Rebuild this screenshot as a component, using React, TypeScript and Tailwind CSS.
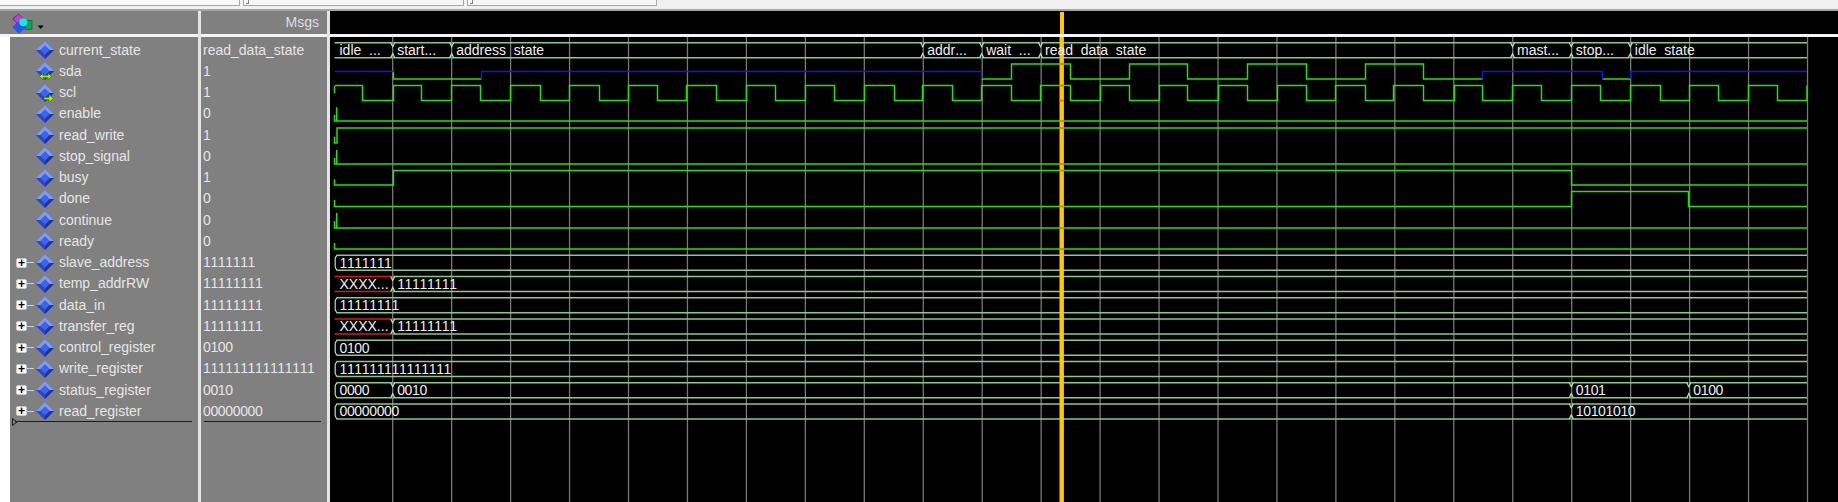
import React from "react";

const FONT = "font-['Liberation_Sans',Arial,sans-serif] [font-kerning:none]";

type Sig = { name: string; value: string; kind?: "plain" | "bi" | "out" | "bus" };
const signals: Sig[] = [
  { name: "current_state", value: "read_data_state" },
  { name: "sda", value: "1", kind: "bi" },
  { name: "scl", value: "1", kind: "out" },
  { name: "enable", value: "0" },
  { name: "read_write", value: "1" },
  { name: "stop_signal", value: "0" },
  { name: "busy", value: "1" },
  { name: "done", value: "0" },
  { name: "continue", value: "0" },
  { name: "ready", value: "0" },
  { name: "slave_address", value: "1111111", kind: "bus" },
  { name: "temp_addrRW", value: "11111111", kind: "bus" },
  { name: "data_in", value: "11111111", kind: "bus" },
  { name: "transfer_reg", value: "11111111", kind: "bus" },
  { name: "control_register", value: "0100", kind: "bus" },
  { name: "write_register", value: "111111111111111", kind: "bus" },
  { name: "status_register", value: "0010", kind: "bus" },
  { name: "read_register", value: "00000000", kind: "bus" },
];

const END = 1807;
const grid = Array.from({ length: 25 }, (_, i) => 392.7 + 58.95 * i);
const rowTop = (i: number) => 42.7 + 21.25 * i;
const G = "#22e600";
const BUS = "#8cc88c";
const TICK = "#a8f0a8";

function Diamond({ kind }: { kind?: Sig["kind"] }) {
  return (
    <svg width="22" height="22" viewBox="0 0 22 22" className="shrink-0">
      <polygon points="11,2 20,11 11,20 2,11" fill="#3f63df" />
      <polygon points="11,2 20,11 15.5,11 11,6.5 6.5,11 2,11" fill="#7d9cf0" />
      <polygon points="2,11 6.5,11 11,15.5 11,20" fill="#2b47c4" />
      <polygon points="20,11 15.5,11 11,15.5 11,20" fill="#1f33a8" />
      <polygon points="11,6.5 15.5,11 11,15.5 6.5,11" fill="#3d64ea" />
      {kind === "bi" && (
        <polygon
          points="5.5,16.5 9,13 9,15.3 14,15.3 14,13 17.5,16.5 14,20 14,17.7 9,17.7 9,20"
          fill="#a6f000"
          stroke="#127a10"
          strokeWidth="0.7"
        />
      )}
      {kind === "out" && (
        <polygon points="10,15.3 15,15.3 15,12.5 19.5,16.5 15,20.5 15,17.7 10,17.7" fill="#a6f000" stroke="#127a10" strokeWidth="0.7" />
      )}
    </svg>
  );
}

function NameRow({ s }: { s: Sig }) {
  return (
    <div className="flex h-[21.25px] items-center">
      <div className="flex w-[24px] items-center justify-end">
        {s.kind === "bus" && (
          <>
            <span className="flex h-[10px] w-[11px] items-center justify-center rounded-[2px] border border-[#c4c8d4] bg-white text-[12px] font-bold leading-none text-black">
              +
            </span>
            <span className="h-[1px] w-[7px] bg-[#cfcfcf]" />
          </>
        )}
      </div>
      <Diamond kind={s.kind} />
      <span className="ml-[3px] whitespace-nowrap text-[14px] text-[#e6e6e6]">{s.name}</span>
    </div>
  );
}

const sclEdges = [
  362.5, 393.5, 421.5, 451.5, 480.5, 510.5, 540.5, 569.5, 599.5, 628.5, 657.5, 686.5, 716.5, 746.5, 775.5, 805.5, 834.5, 864.5, 894.5, 922.5, 952.5,
  981.5, 1011.5, 1040.5, 1070.5, 1100.5, 1129.5, 1159.5, 1187.5, 1218.5, 1247.5, 1277.5, 1306.5, 1335.5, 1365.5, 1393.5, 1423.5, 1454.5, 1482.5, 1512.5,
  1541.5, 1571.5, 1600.5, 1630.5, 1660.5, 1689.5, 1718.5, 1748.5, 1777.5, 1807,
];

const sclPath = (() => {
  const hi = 85.5;
  const lo = 100.5;
  let d = `M335 ${hi}`;
  sclEdges.forEach((x, i) => {
    const a = i % 2 === 0 ? hi : lo;
    const b = i % 2 === 0 ? lo : hi;
    d += ` L${x} ${a} L${x} ${b}`;
  });
  return d;
})();

type Seg = { x1: number; x2: number; label?: string; red?: boolean; noTick?: boolean };
const busRows: { row: number; segs: Seg[] }[] = [
  {
    row: 0,
    segs: [
      { x1: 334, x2: 392.7, label: "idle  ...", noTick: true },
      { x1: 392.7, x2: 451.7, label: "start..." },
      { x1: 451.7, x2: 922.7, label: "address  state" },
      { x1: 922.7, x2: 981.7, label: "addr..." },
      { x1: 981.7, x2: 1040.5, label: "wait  ..." },
      { x1: 1040.5, x2: 1512.5, label: "read  data  state" },
      { x1: 1512.5, x2: 1571.3, label: "mast..." },
      { x1: 1571.3, x2: 1630.3, label: "stop..." },
      { x1: 1630.3, x2: END, label: "idle  state" },
    ],
  },
  { row: 10, segs: [{ x1: 335, x2: END, label: "1111111" }] },
  {
    row: 11,
    segs: [
      { x1: 334, x2: 392.7, label: "XXXX...", red: true, noTick: true },
      { x1: 392.7, x2: END, label: "11111111" },
    ],
  },
  { row: 12, segs: [{ x1: 335, x2: END, label: "11111111" }] },
  {
    row: 13,
    segs: [
      { x1: 334, x2: 392.7, label: "XXXX...", red: true, noTick: true },
      { x1: 392.7, x2: END, label: "11111111" },
    ],
  },
  { row: 14, segs: [{ x1: 335, x2: END, label: "0100" }] },
  { row: 15, segs: [{ x1: 335, x2: END, label: "111111111111111" }] },
  {
    row: 16,
    segs: [
      { x1: 335, x2: 392.7, label: "0000" },
      { x1: 392.7, x2: 1571.3, label: "0010" },
      { x1: 1571.3, x2: 1688.8, label: "0101" },
      { x1: 1688.8, x2: END, label: "0100" },
    ],
  },
  {
    row: 17,
    segs: [
      { x1: 335, x2: 1571.3, label: "00000000" },
      { x1: 1571.3, x2: END, label: "10101010" },
    ],
  },
];

function BusShape({ row, seg }: { row: number; seg: Seg }) {
  const t = rowTop(row);
  const b = t + 15;
  const x1 = seg.x1;
  const x2 = seg.x2;
  const first = x1 < 340;
  const rightEnd = x2 >= END ? x2 : x2 - 0.5;
  const leftEnd = first && !seg.noTick ? x1 + 1.5 : x1 + 0.5;
  return (
    <g fill="none">
      <path d={`M${leftEnd} ${t} L${rightEnd} ${t} M${leftEnd} ${b} L${rightEnd} ${b}`} stroke={seg.red ? "#d81818" : BUS} strokeWidth="1.4" />
      {!seg.noTick && first && (
        <path d={`M${x1 + 1.8} ${t} L${x1 + 0.2} ${t + 3} L${x1 + 0.2} ${b - 3} L${x1 + 1.8} ${b}`} stroke={TICK} strokeWidth="1.2" />
      )}
      {!seg.noTick && !first && (
        <path
          d={`M${x1 - 2} ${t} L${x1} ${t + 4} L${x1 + 2} ${t} M${x1 - 2} ${b} L${x1} ${b - 4} L${x1 + 2} ${b}`}
          stroke={TICK}
          strokeWidth="1.2"
        />
      )}
    </g>
  );
}

function BusLabel({ row, seg }: { row: number; seg: Seg }) {
  const digits = /^[01]+$/.test(seg.label ?? "");
  return (
    <text
      x={seg.x1 + (seg.noTick ? 5.5 : 4.5)}
      y={rowTop(row) + 12.5}
      fill="#efefef"
      fontSize="14"
      letterSpacing={digits ? "-0.35" : undefined}
      style={{ whiteSpace: "pre" }}
    >
      {seg.label}
    </text>
  );
}

function Waves() {
  const sda =
    "M393.5 71.5 L393.5 79 L481.5 79 M981.5 79 L1011.5 79 L1011.5 64 L1070.5 64 L1070.5 79 L1129.5 79 L1129.5 64 L1187.5 64 L1187.5 79 L1247.5 79 L1247.5 64 L1306.5 64 L1306.5 79 L1365.5 79 L1365.5 64 L1423.5 64 L1423.5 79 L1482.5 79 M1602.5 79 L1630.5 79";
  const sdaZ =
    "M335 71.5 L393.5 71.5 M481.5 79 L481.5 71.5 L981.5 71.5 L981.5 79 M1482.5 79 L1482.5 71.5 L1602.5 71.5 L1602.5 79 M1630.5 79 L1630.5 71.5 L1807 71.5";
  const simple = [
    "M334.5 115 L334.5 121 L1807 121 M336.7 107.3 L336.7 121",
    "M334.5 136.7 L334.5 143 L337 143 L337 128 L1807 128",
    "M334.5 158 L334.5 164 L1807 164 M336.7 150 L336.7 164",
    "M334.5 179.3 L334.5 185 L393.5 185 L393.5 170.5 L1571.5 170.5 L1571.5 185 L1807 185",
    "M334.5 200 L334.5 206.5 L1571.5 206.5 L1571.5 191.5 L1688.5 191.5 L1688.5 206.5 L1807 206.5",
    "M334.5 221 L334.5 228 L1807 228 M336.7 213 L336.7 228",
    "M334.5 243 L334.5 249 L1807 249",
    "M334.5 86 L334.5 93",
    sclPath,
    sda,
  ];
  const cursorHits = [64, 85.5, 100.5, 121, 128, 164, 170.5, 206.5, 228, 249];
  return (
    <svg viewBox="330 37 1508 465" className="block h-[465px] w-[1508px]" style={{ fontFamily: "'Liberation Sans', Arial, sans-serif", fontKerning: "none" }}>
      {grid.map((x) => (
        <line key={x} x1={x} x2={x} y1="37" y2="502" stroke="#787878" strokeWidth="1.3" />
      ))}
      {busRows.map((r) => r.segs.map((s, i) => <BusShape key={`${r.row}-${i}`} row={r.row} seg={s} />))}
      {simple.map((d) => (
        <path key={d} d={d} stroke={G} strokeWidth="1.45" fill="none" />
      ))}
      <path d={sdaZ} stroke="#1018e8" strokeWidth="1.45" fill="none" />
      <rect x="1059.5" y="37" width="4.4" height="465" fill="#ffc800" />
      {cursorHits.map((y) => (
        <rect key={y} x="1059.5" y={y - 1} width="4.4" height="2" fill="#f07a00" />
      ))}
      {busRows.map((r) => r.segs.map((s, i) => <BusLabel key={`${r.row}-${i}`} row={r.row} seg={s} />))}
    </svg>
  );
}

export default function App() {
  return (
    <div className={`${FONT} h-[502px] w-[1838px] overflow-hidden bg-white`}>
      <div className="flex h-[11px] flex-col bg-[#f0f0f0]">
        <div className="flex h-[7px] gap-[3px]">
          <div className="relative h-[6px] w-[240px] border-r border-b border-[#a8a8a8] bg-[#fafafa]" />
          <div className="relative h-[6px] w-[221px] border-r border-b border-l border-[#a8a8a8] bg-[#f6f6f6]">
            <span className="absolute top-[0px] left-[2px] h-[4px] w-[3px] border-r border-b border-[#808080]" />
          </div>
          <div className="relative h-[6px] w-[190px] border-r border-b border-l border-[#a8a8a8] bg-[#f6f6f6]">
            <span className="absolute top-[0px] left-[2px] h-[4px] w-[3px] border-r border-b border-[#808080]" />
          </div>
        </div>
        <div className="mt-[2px] h-[2px] bg-[#a4a4a4]" />
      </div>
      <div className="flex h-[491px]">
        <div className="flex w-[198px] flex-col">
          <div className="flex h-[23px] items-center bg-[#808080] pl-[12px]">
            <svg width="34" height="22" viewBox="0 0 34 22">
              <polygon points="0.7,7 6.5,2 12,7.5 6,12" fill="#c43bd8" stroke="#5b1670" strokeWidth="0.7" />
              <rect x="13" y="8.5" width="7" height="9" fill="#1aa048" stroke="#0a6a28" strokeWidth="0.7" />
              <polygon points="0.3,15 7,9 14,15.5 7,21.8" fill="#2a55e6" />
              <circle cx="11.3" cy="10.2" r="4" fill="#18e4ee" />
              <polygon points="25.7,13.5 31.7,13.5 28.7,17" fill="#000" />
            </svg>
          </div>
          <div className="h-[3px] bg-[#f4f4f4]" />
          <div className="flex flex-1 bg-white">
            <div className="w-[10px]" />
            <div className="relative flex-1 bg-[#808080] pt-[2.4px]">
              {signals.map((s) => (
                <NameRow key={s.name} s={s} />
              ))}
              <div className="ml-[5px] mt-[-0.5px] h-[1px] w-[177px] bg-[#1c1c1c]" />
              <svg width="6" height="8" viewBox="0 0 6 8" className="absolute top-[381px] left-[2px]">
                <polygon points="0.5,0.5 5,4 0.5,7.5" fill="none" stroke="#1c1c1c" strokeWidth="1" />
              </svg>
            </div>
          </div>
        </div>
        <div className="w-[3px] bg-[#e4e4e4]" />
        <div className="flex w-[126px] flex-col">
          <div className="flex h-[23px] items-center justify-end bg-[#808080] pr-[8px] text-[14px] text-[#dedede]">Msgs</div>
          <div className="h-[3px] bg-[#f4f4f4]" />
          <div className="flex-1 bg-[#808080] pt-[2.4px] pl-[2px]">
            {signals.map((s) => (
              <div
                key={s.name}
                className={`flex h-[21.25px] items-center whitespace-nowrap text-[14px] text-[#e6e6e6] ${/^[01]+$/.test(s.value) ? "tracking-[-0.35px]" : ""}`}
              >
                {s.value}
              </div>
            ))}
            <div className="ml-[1px] mt-[-0.5px] h-[1px] w-[117px] bg-[#1c1c1c]" />
          </div>
        </div>
        <div className="w-[3px] bg-[#e4e4e4]" />
        <div className="relative flex flex-1 flex-col bg-black">
          <div className="h-[23px] bg-black" />
          <div className="h-[3px] bg-[#f4f4f4]" />
          <Waves />
          <div className="absolute top-[1px] left-[729.5px] h-[22px] w-[4.4px] bg-[#ffc800]" />
        </div>
      </div>
    </div>
  );
}
